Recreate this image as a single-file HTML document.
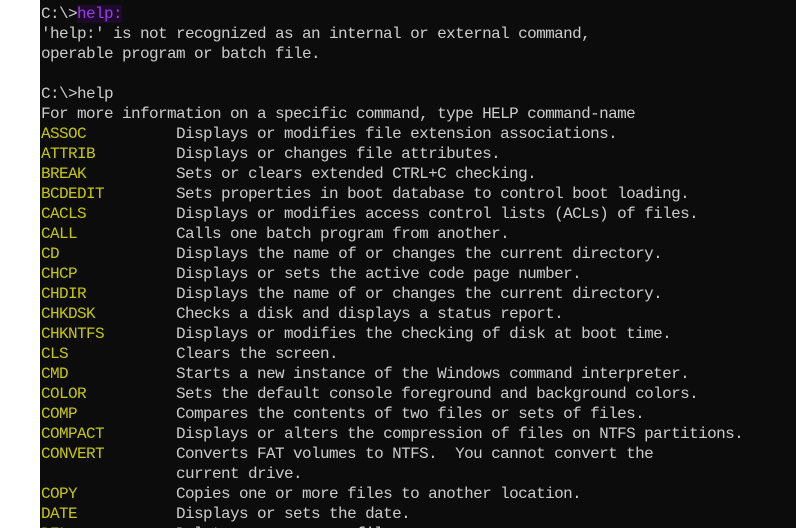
<!DOCTYPE html>
<html><head><meta charset="utf-8"><style>
html,body{margin:0;padding:0;background:#fff;width:798px;height:531px;overflow:hidden}
#t{position:absolute;left:40px;top:0;width:756px;height:528px;background:#0c0c0c;overflow:hidden}
pre{position:absolute;left:1px;top:4px;margin:0;font-family:"Liberation Mono",monospace;font-size:16px;line-height:20px;color:#cccccc;letter-spacing:-0.6px}
.y{color:#c8c800}
.p{color:#9a3cf0;background:#1e0a2a}
</style></head><body><div id="t"><pre>C:\&gt;<span class="p">help:</span>
'help:' is not recognized as an internal or external command,
operable program or batch file.

C:\&gt;help
For more information on a specific command, type HELP command-name
<span class="y">ASSOC</span>          Displays or modifies file extension associations.
<span class="y">ATTRIB</span>         Displays or changes file attributes.
<span class="y">BREAK</span>          Sets or clears extended CTRL+C checking.
<span class="y">BCDEDIT</span>        Sets properties in boot database to control boot loading.
<span class="y">CACLS</span>          Displays or modifies access control lists (ACLs) of files.
<span class="y">CALL</span>           Calls one batch program from another.
<span class="y">CD</span>             Displays the name of or changes the current directory.
<span class="y">CHCP</span>           Displays or sets the active code page number.
<span class="y">CHDIR</span>          Displays the name of or changes the current directory.
<span class="y">CHKDSK</span>         Checks a disk and displays a status report.
<span class="y">CHKNTFS</span>        Displays or modifies the checking of disk at boot time.
<span class="y">CLS</span>            Clears the screen.
<span class="y">CMD</span>            Starts a new instance of the Windows command interpreter.
<span class="y">COLOR</span>          Sets the default console foreground and background colors.
<span class="y">COMP</span>           Compares the contents of two files or sets of files.
<span class="y">COMPACT</span>        Displays or alters the compression of files on NTFS partitions.
<span class="y">CONVERT</span>        Converts FAT volumes to NTFS.  You cannot convert the
               current drive.
<span class="y">COPY</span>           Copies one or more files to another location.
<span class="y">DATE</span>           Displays or sets the date.
<span class="y">DEL</span>            Deletes one or more files.
</pre></div></body></html>
